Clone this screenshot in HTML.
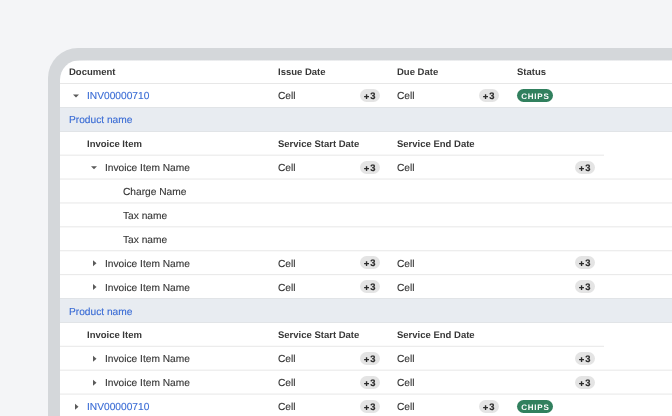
<!DOCTYPE html>
<html><head><meta charset="utf-8"><style>
html,body{margin:0;padding:0}
body{width:672px;height:416px;overflow:hidden;background:#f4f5f7;position:relative;font-family:"Liberation Sans",sans-serif;text-rendering:geometricPrecision}
.frame{position:absolute;left:48px;top:48px;width:700px;height:420px;background:#d4d7da;border-radius:30px}
.inner{position:absolute;left:60px;top:60px;width:700px;height:420px;background:#fff;border-radius:20px 0 0 0;overflow:hidden}
.wrap{position:absolute;left:0;top:0;width:672px;height:416px;overflow:hidden;will-change:transform}
.ln{position:absolute;height:1px}
.prod{position:absolute;left:60px;width:612px;background:#e8ecf1}
.t,.h{position:absolute;height:24px;line-height:26px;white-space:nowrap;color:#363636;-webkit-text-stroke:0.12px #363636}
.t{font-size:10.2px}
.h{font-size:9.5px;font-weight:bold;color:#383838;-webkit-text-stroke:0}
.link{color:#3a6cd5;-webkit-text-stroke-color:#3a6cd5}
.tri{position:absolute}
.b{position:absolute;width:20px;height:13px;border-radius:7px;background:#e4e4e4;color:#2b2b2b;font-size:9.4px;font-weight:bold}
.b svg{position:absolute;left:0;top:0}
.b span{position:absolute;left:10.2px;top:-0.6px;line-height:15.5px;-webkit-text-stroke:0.2px #2b2b2b}
.c{position:absolute;width:36px;height:13px;border-radius:7px;background:#31805e;color:#fff;font-size:8px;font-weight:bold;line-height:15px;text-align:center;letter-spacing:0.8px;text-indent:0.8px}
</style></head><body>
<div class="wrap">
<div class="frame"></div>
<div class="inner"></div>
<div class="ln" style="left:74px;width:598px;top:60px;background:linear-gradient(to right,rgba(212,215,218,0.6),rgba(212,215,218,0.45) 14px,rgba(212,215,218,0.45))"></div>
<div class="ln" style="left:60px;width:612px;top:83px;background:rgb(231, 231, 231)"></div>
<div class="h" style="left:69px;top:59.9px">Document</div>
<div class="h" style="left:278px;top:59.9px">Issue Date</div>
<div class="h" style="left:397px;top:59.9px">Due Date</div>
<div class="h" style="left:517px;top:59.9px">Status</div>
<svg class="tri" style="left:72px;top:0px" width="8" height="416" viewBox="0 0 8 416"><path d="M1 94.42 L7 94.42 L4 97.42 Z" fill="#5a5a5a"/></svg>
<div class="t link" style="left:87px;top:84.27px">INV00000710</div>
<div class="t" style="left:278px;top:84.27px">Cell</div>
<div class="b" style="left:360px;top:89px"><svg width="20" height="13" viewBox="0 0 20 13"><path d="M4.1 7.6h4.9M6.55 5.15v4.9" stroke="#2b2b2b" stroke-width="1.35"/></svg><span>3</span></div>
<div class="t" style="left:397px;top:84.27px">Cell</div>
<div class="b" style="left:479px;top:89px"><svg width="20" height="13" viewBox="0 0 20 13"><path d="M4.1 7.6h4.9M6.55 5.15v4.9" stroke="#2b2b2b" stroke-width="1.35"/></svg><span>3</span></div>
<div class="c" style="left:517px;top:89px">CHIPS</div>
<div class="prod" style="top:108px;height:23px"></div>
<div class="ln" style="left:60px;width:612px;top:107px;background:#e1e4e7"></div>
<div class="ln" style="left:60px;width:612px;top:131px;background:#e1e4e7"></div>
<div class="t link" style="left:69px;top:108.19px">Product name</div>
<div class="ln" style="left:60px;width:544px;top:154px;background:rgb(247, 247, 247)"></div>
<div class="ln" style="left:60px;width:544px;top:155px;background:rgb(239, 239, 239)"></div>
<div class="h" style="left:87px;top:131.66px">Invoice Item</div>
<div class="h" style="left:278px;top:131.66px">Service Start Date</div>
<div class="h" style="left:397px;top:131.66px">Service End Date</div>
<div class="ln" style="left:60px;width:612px;top:178px;background:rgb(244, 244, 244)"></div>
<div class="ln" style="left:60px;width:612px;top:179px;background:rgb(242, 242, 242)"></div>
<svg class="tri" style="left:90px;top:0px" width="8" height="416" viewBox="0 0 8 416"><path d="M1 166.18 L7 166.18 L4 169.18 Z" fill="#5a5a5a"/></svg>
<div class="t" style="left:105px;top:156.03px">Invoice Item Name</div>
<div class="t" style="left:278px;top:156.03px">Cell</div>
<div class="b" style="left:360px;top:161px"><svg width="20" height="13" viewBox="0 0 20 13"><path d="M4.1 7.6h4.9M6.55 5.15v4.9" stroke="#2b2b2b" stroke-width="1.35"/></svg><span>3</span></div>
<div class="t" style="left:397px;top:156.03px">Cell</div>
<div class="b" style="left:575px;top:161px"><svg width="20" height="13" viewBox="0 0 20 13"><path d="M4.1 7.6h4.9M6.55 5.15v4.9" stroke="#2b2b2b" stroke-width="1.35"/></svg><span>3</span></div>
<div class="ln" style="left:60px;width:612px;top:202px;background:rgb(242, 242, 242)"></div>
<div class="ln" style="left:60px;width:612px;top:203px;background:rgb(244, 244, 244)"></div>
<div class="t" style="left:123px;top:179.95px">Charge Name</div>
<div class="ln" style="left:60px;width:612px;top:226px;background:rgb(239, 239, 239)"></div>
<div class="ln" style="left:60px;width:612px;top:227px;background:rgb(247, 247, 247)"></div>
<div class="t" style="left:123px;top:203.87px">Tax name</div>
<div class="ln" style="left:60px;width:612px;top:250px;background:rgb(237, 237, 237)"></div>
<div class="ln" style="left:60px;width:612px;top:251px;background:rgb(249, 249, 249)"></div>
<div class="t" style="left:123px;top:227.79px">Tax name</div>
<div class="ln" style="left:60px;width:612px;top:274px;background:rgb(234, 234, 234)"></div>
<div class="ln" style="left:60px;width:612px;top:275px;background:rgb(252, 252, 252)"></div>
<svg class="tri" style="left:90px;top:0px" width="8" height="416" viewBox="0 0 8 416"><path d="M3 260.16 L6.5 263.16 L3 266.16 Z" fill="#5a5a5a"/></svg>
<div class="t" style="left:105px;top:251.71px">Invoice Item Name</div>
<div class="t" style="left:278px;top:251.71px">Cell</div>
<div class="b" style="left:360px;top:256px"><svg width="20" height="13" viewBox="0 0 20 13"><path d="M4.1 7.6h4.9M6.55 5.15v4.9" stroke="#2b2b2b" stroke-width="1.35"/></svg><span>3</span></div>
<div class="t" style="left:397px;top:251.71px">Cell</div>
<div class="b" style="left:575px;top:256px"><svg width="20" height="13" viewBox="0 0 20 13"><path d="M4.1 7.6h4.9M6.55 5.15v4.9" stroke="#2b2b2b" stroke-width="1.35"/></svg><span>3</span></div>
<svg class="tri" style="left:90px;top:0px" width="8" height="416" viewBox="0 0 8 416"><path d="M3 284.08 L6.5 287.08 L3 290.08 Z" fill="#5a5a5a"/></svg>
<div class="t" style="left:105px;top:275.63px">Invoice Item Name</div>
<div class="t" style="left:278px;top:275.63px">Cell</div>
<div class="b" style="left:360px;top:280px"><svg width="20" height="13" viewBox="0 0 20 13"><path d="M4.1 7.6h4.9M6.55 5.15v4.9" stroke="#2b2b2b" stroke-width="1.35"/></svg><span>3</span></div>
<div class="t" style="left:397px;top:275.63px">Cell</div>
<div class="b" style="left:575px;top:280px"><svg width="20" height="13" viewBox="0 0 20 13"><path d="M4.1 7.6h4.9M6.55 5.15v4.9" stroke="#2b2b2b" stroke-width="1.35"/></svg><span>3</span></div>
<div class="prod" style="top:299px;height:23px"></div>
<div class="ln" style="left:60px;width:612px;top:298px;background:#e1e4e7"></div>
<div class="ln" style="left:60px;width:612px;top:322px;background:#e1e4e7"></div>
<div class="t link" style="left:69px;top:299.55px">Product name</div>
<div class="ln" style="left:60px;width:544px;top:345px;background:rgb(250, 250, 250)"></div>
<div class="ln" style="left:60px;width:544px;top:346px;background:rgb(236, 236, 236)"></div>
<div class="h" style="left:87px;top:323.02px">Invoice Item</div>
<div class="h" style="left:278px;top:323.02px">Service Start Date</div>
<div class="h" style="left:397px;top:323.02px">Service End Date</div>
<div class="ln" style="left:60px;width:612px;top:369px;background:rgb(247, 247, 247)"></div>
<div class="ln" style="left:60px;width:612px;top:370px;background:rgb(239, 239, 239)"></div>
<svg class="tri" style="left:90px;top:0px" width="8" height="416" viewBox="0 0 8 416"><path d="M3 355.84 L6.5 358.84 L3 361.84 Z" fill="#5a5a5a"/></svg>
<div class="t" style="left:105px;top:347.39px">Invoice Item Name</div>
<div class="t" style="left:278px;top:347.39px">Cell</div>
<div class="b" style="left:360px;top:352px"><svg width="20" height="13" viewBox="0 0 20 13"><path d="M4.1 7.6h4.9M6.55 5.15v4.9" stroke="#2b2b2b" stroke-width="1.35"/></svg><span>3</span></div>
<div class="t" style="left:397px;top:347.39px">Cell</div>
<div class="b" style="left:575px;top:352px"><svg width="20" height="13" viewBox="0 0 20 13"><path d="M4.1 7.6h4.9M6.55 5.15v4.9" stroke="#2b2b2b" stroke-width="1.35"/></svg><span>3</span></div>
<div class="ln" style="left:60px;width:612px;top:393px;background:rgb(245, 245, 245)"></div>
<div class="ln" style="left:60px;width:612px;top:394px;background:rgb(241, 241, 241)"></div>
<svg class="tri" style="left:90px;top:0px" width="8" height="416" viewBox="0 0 8 416"><path d="M3 379.76 L6.5 382.76 L3 385.76 Z" fill="#5a5a5a"/></svg>
<div class="t" style="left:105px;top:371.31px">Invoice Item Name</div>
<div class="t" style="left:278px;top:371.31px">Cell</div>
<div class="b" style="left:360px;top:376px"><svg width="20" height="13" viewBox="0 0 20 13"><path d="M4.1 7.6h4.9M6.55 5.15v4.9" stroke="#2b2b2b" stroke-width="1.35"/></svg><span>3</span></div>
<div class="t" style="left:397px;top:371.31px">Cell</div>
<div class="b" style="left:575px;top:376px"><svg width="20" height="13" viewBox="0 0 20 13"><path d="M4.1 7.6h4.9M6.55 5.15v4.9" stroke="#2b2b2b" stroke-width="1.35"/></svg><span>3</span></div>
<div class="ln" style="left:60px;width:612px;top:417px;background:rgb(242, 242, 242)"></div>
<div class="ln" style="left:60px;width:612px;top:418px;background:rgb(244, 244, 244)"></div>
<svg class="tri" style="left:72px;top:0px" width="8" height="416" viewBox="0 0 8 416"><path d="M3 403.68 L6.5 406.68 L3 409.68 Z" fill="#5a5a5a"/></svg>
<div class="t link" style="left:87px;top:395.23px">INV00000710</div>
<div class="t" style="left:278px;top:395.23px">Cell</div>
<div class="b" style="left:360px;top:400px"><svg width="20" height="13" viewBox="0 0 20 13"><path d="M4.1 7.6h4.9M6.55 5.15v4.9" stroke="#2b2b2b" stroke-width="1.35"/></svg><span>3</span></div>
<div class="t" style="left:397px;top:395.23px">Cell</div>
<div class="b" style="left:479px;top:400px"><svg width="20" height="13" viewBox="0 0 20 13"><path d="M4.1 7.6h4.9M6.55 5.15v4.9" stroke="#2b2b2b" stroke-width="1.35"/></svg><span>3</span></div>
<div class="c" style="left:517px;top:400px">CHIPS</div>
</div>
</body></html>
